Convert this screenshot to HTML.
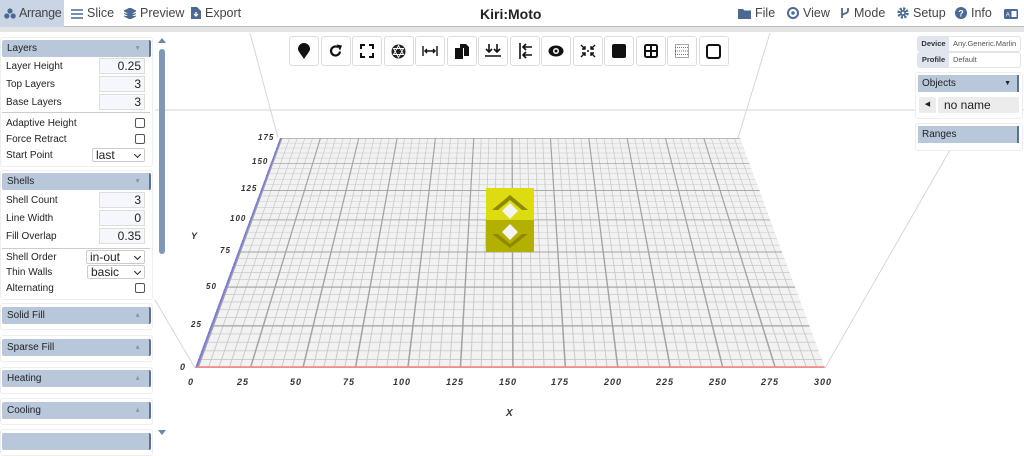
<!DOCTYPE html>
<html><head><meta charset="utf-8"><style>
*{box-sizing:border-box;margin:0;padding:0}
body{width:1024px;height:436px;overflow:hidden;background:#fff;font-family:"Liberation Sans",sans-serif;position:relative;color:#222}
.abs{position:absolute}
#top{left:0;top:0;width:1024px;height:27px;background:#fff;border-bottom:1px solid #bbb}
#band{left:0;top:27px;width:1024px;height:5px;background:#e4e4e4}
.tab{position:absolute;top:0;height:27px;line-height:27px;font-size:12.5px;color:#444;white-space:nowrap}
.tab svg{vertical-align:-2px;margin-right:4px}
#grid{left:0;top:0;width:600px;height:350px;transform-origin:0 0;
transform:matrix3d(0.76667,0,0,0,-0.39314,0.37343,0,-0.00077086,0,0,1,0,280,138,0,1);
background-color:#f2f2f2;
background-image:linear-gradient(90deg,#a2a2a2 0 1.6px,transparent 1.6px),linear-gradient(180deg,#a2a2a2 0 1.6px,transparent 1.6px),linear-gradient(90deg,#cacaca 0 1px,transparent 1px),linear-gradient(180deg,#cacaca 0 1px,transparent 1px);
background-size:50px 50px,50px 50px,10px 10px,10px 10px;background-position:0 0,0 0,0 0,0 0;
border-left:2px solid #7a7ae0;border-bottom:2px solid #f08c8c}
.lbl{position:absolute;font-size:8px;font-style:italic;font-weight:bold;color:#333;letter-spacing:1px}
.xl{top:377px;font-size:9px}
.tb{position:absolute;top:36px;width:30px;height:30px;border:1px solid #ddd;border-radius:3px;background:#fff;display:flex;align-items:center;justify-content:center}
.panel{position:absolute;left:0;width:153px;background:#fff;border:1px solid #eee;border-radius:3px}
.hdr{position:absolute;left:2px;width:149px;height:17px;background:#b9c7db;border-right:2px solid #5a7394;font-size:10px;line-height:17px;padding-left:5px;color:#222;border-radius:2px}
.hdr i{position:absolute;right:8px;top:0;font-style:normal;font-size:7px;color:#8898b0}
.row{position:absolute;left:6px;font-size:10px;color:#222}
.inp{position:absolute;left:99px;width:46px;height:16px;border:1px solid #ddd;background:#f5f7fc;font-size:12px;text-align:right;padding-right:3px;line-height:15px}
.cb{position:absolute;left:135px;width:10px;height:10px;border:1px solid #555;border-radius:2px;background:#fff}
.sel{position:absolute;left:88px;width:57px;height:14px;border:1px solid #ccc;border-radius:2px;font-size:12px;line-height:13px;padding-left:3px;background:#fff}
.sel:after{content:"";position:absolute;right:4px;top:3px;width:4px;height:4px;border-right:1.5px solid #222;border-bottom:1.5px solid #222;transform:rotate(45deg)}
.sep{position:absolute;left:2px;width:148px;height:1px;background:#ccc}
</style></head><body>

<svg class="abs" style="left:0;top:0" width="1024" height="436">
<g stroke="#d6d6d6" stroke-width="1" fill="none">
<line x1="155" y1="110" x2="1024" y2="110"/>
<line x1="250" y1="33" x2="278" y2="138"/>
<line x1="770" y1="33" x2="738" y2="138"/>
<line x1="155" y1="300" x2="195" y2="368"/>
<line x1="825" y1="368" x2="950" y2="150"/>
</g>
</svg>

<div id="grid" class="abs"></div>

<svg class="abs" style="left:486px;top:188px" width="48" height="64" viewBox="0 0 48 64">
<rect x="0" y="0" width="48" height="32" fill="#dcdc10"/>
<rect x="0" y="32" width="48" height="32" fill="#b4b000"/>
<polygon points="24,7 42,22 36,22 24,12 12,22 6,22" fill="#8e8a00"/>
<polygon points="24,15 32,23 24,31 16,23" fill="#f4f4f4"/>
<polygon points="24,36 32,44 24,52 16,44" fill="#f4f4f4"/>
<polygon points="6,46 12,46 24,56 36,46 42,46 24,60" fill="#8e8a00"/>
</svg>

<div class="lbl" style="left:258px;top:133px">175</div>
<div class="lbl" style="left:252px;top:157px">150</div>
<div class="lbl" style="left:241px;top:184px">125</div>
<div class="lbl" style="left:230px;top:214px">100</div>
<div class="lbl" style="left:220px;top:246px">75</div>
<div class="lbl" style="left:206px;top:282px">50</div>
<div class="lbl" style="left:191px;top:320px">25</div>
<div class="lbl" style="left:180px;top:362px;font-size:9px">0</div>
<div class="lbl" style="left:191px;top:231px;font-size:9px">Y</div>
<div class="lbl xl" style="left:188px">0</div>
<div class="lbl xl" style="left:237px">25</div>
<div class="lbl xl" style="left:290px">50</div>
<div class="lbl xl" style="left:343px">75</div>
<div class="lbl xl" style="left:393px">100</div>
<div class="lbl xl" style="left:446px">125</div>
<div class="lbl xl" style="left:499px">150</div>
<div class="lbl xl" style="left:551px">175</div>
<div class="lbl xl" style="left:604px">200</div>
<div class="lbl xl" style="left:656px">225</div>
<div class="lbl xl" style="left:709px">250</div>
<div class="lbl xl" style="left:761px">275</div>
<div class="lbl xl" style="left:814px">300</div>
<div class="lbl" style="left:506px;top:408px;font-size:10px">X</div>

<div id="top" class="abs"></div>
<div id="band" class="abs"></div>
<div class="tab" style="left:0;width:64px;background:#c9d5e4;padding-left:4px;overflow:hidden;letter-spacing:-0.3px"><svg width="12" height="11" viewBox="0 0 12 11" style="margin-right:3px"><circle cx="6" cy="3" r="2.6" fill="#4a6a94"/><circle cx="2.8" cy="8" r="2.6" fill="#4a6a94"/><circle cx="9.2" cy="8" r="2.6" fill="#4a6a94"/></svg>Arrange</div>
<div class="tab" style="left:71px"><svg width="12" height="10" viewBox="0 0 12 10"><path d="M0 1h12M0 5h12M0 9h12" stroke="#4a6a94" stroke-width="1.5"/></svg>Slice</div>
<div class="tab" style="left:124px"><svg width="12" height="11" viewBox="0 0 12 11"><path d="M6 0L12 3 6 6 0 3z M0 5.5L6 8.5 12 5.5 M0 8L6 11 12 8" fill="#4a6a94" stroke="#4a6a94" stroke-width="1"/></svg>Preview</div>
<div class="tab" style="left:191px"><svg width="10" height="12" viewBox="0 0 10 12"><path d="M0 0h6l4 4v8H0z" fill="#4a6a94"/><path d="M5 5v4M3 7l2 2 2-2" stroke="#fff" stroke-width="1.3" fill="none"/></svg>Export</div>
<div class="abs" style="left:480px;top:6px;font-size:14px;font-weight:bold;color:#222">Kiri:Moto</div>
<div class="tab" style="left:738px"><svg width="13" height="11" viewBox="0 0 13 11"><path d="M0 1h5l1.5 1.5H13V11H0z" fill="#4a6a94"/></svg>File</div>
<div class="tab" style="left:787px"><svg width="12" height="12" viewBox="0 0 12 12"><circle cx="6" cy="6" r="5" fill="none" stroke="#4a6a94" stroke-width="2"/><circle cx="6" cy="6" r="1.8" fill="#4a6a94"/></svg>View</div>
<div class="tab" style="left:840px"><svg width="10" height="12" viewBox="0 0 10 12"><path d="M2 1v10M8 1v3c0 3-6 2-6 5" stroke="#4a6a94" stroke-width="1.8" fill="none"/></svg>Mode</div>
<div class="tab" style="left:897px"><svg width="12" height="12" viewBox="0 0 12 12"><circle cx="6" cy="6" r="4.2" fill="none" stroke="#4a6a94" stroke-width="3" stroke-dasharray="2 1.3"/><circle cx="6" cy="6" r="3" fill="#4a6a94"/><circle cx="6" cy="6" r="1.3" fill="#fff"/></svg>Setup</div>
<div class="tab" style="left:955px"><svg width="12" height="12" viewBox="0 0 12 12"><circle cx="6" cy="6" r="6" fill="#4a6a94"/><text x="6" y="9.5" font-size="9" font-weight="bold" fill="#fff" text-anchor="middle" font-family="Liberation Sans">?</text></svg>Info</div>
<div class="tab" style="left:1004px"><svg width="14" height="10" viewBox="0 0 14 10"><rect width="14" height="10" rx="1.5" fill="#4a6a94"/><rect x="7.5" y="2" width="5" height="6" fill="#fff"/><text x="3.8" y="7.5" font-size="6" fill="#fff" text-anchor="middle" font-family="Liberation Sans">A</text></svg></div>

<div class="tb" style="left:289px"><svg width="14" height="16" viewBox="0 0 14 16"><path d="M7 16C3 10 1 8 1 6a6 6 0 0112 0c0 2-2 4-6 10z" fill="#111"/></svg></div>
<div class="tb" style="left:320.5px"><svg width="14" height="14" viewBox="0 0 14 14"><path d="M11 7.5A4.5 4.5 0 1 1 9 3.2" stroke="#111" stroke-width="2.2" fill="none"/><path d="M7.5 0.5L13 1.5 11 6.5z" fill="#111"/></svg></div>
<div class="tb" style="left:352px"><svg width="14" height="14" viewBox="0 0 14 14"><path d="M1 5V1h4M9 1h4v4M13 9v4H9M5 13H1V9" stroke="#111" stroke-width="2" fill="none"/></svg></div>
<div class="tb" style="left:383.5px"><svg width="15" height="15" viewBox="0 0 15 15"><circle cx="7.5" cy="7.5" r="7" fill="#222"/><path d="M7.5 1.5L12.5 10.5H2.5z M7.5 13.5L2.5 4.5H12.5z" fill="none" stroke="#fff" stroke-width="0.9"/></svg></div>
<div class="tb" style="left:415px"><svg width="16" height="10" viewBox="0 0 16 10"><path d="M1 0v10M15 0v10M3 5h10M5 3L3 5l2 2M11 3l2 2-2 2" stroke="#111" stroke-width="1.4" fill="none"/></svg></div>
<div class="tb" style="left:446.5px"><svg width="14" height="15" viewBox="0 0 14 15"><rect x="0" y="4" width="8" height="11" fill="#111"/><path d="M5 0h6l3 3v9H9V4H5z" fill="#111"/></svg></div>
<div class="tb" style="left:478px"><svg width="16" height="14" viewBox="0 0 16 14"><path d="M4 0v8M1 5l3 3 3-3M12 0v8M9 5l3 3 3-3M0 12h16" stroke="#111" stroke-width="1.6" fill="none"/></svg></div>
<div class="tb" style="left:509.5px"><svg width="14" height="16" viewBox="0 0 14 16"><path d="M2 0v16M14 4H5M8 1L5 4l3 3M14 12H5M8 9l-3 3 3 3" stroke="#111" stroke-width="1.6" fill="none"/></svg></div>
<div class="tb" style="left:541px"><svg width="16" height="12" viewBox="0 0 16 12"><ellipse cx="8" cy="6" rx="7.5" ry="5.5" fill="#111"/><circle cx="8" cy="6" r="3" fill="#fff"/><circle cx="8" cy="6" r="1.5" fill="#111"/></svg></div>
<div class="tb" style="left:572.5px"><svg width="16" height="14" viewBox="0 0 16 14"><path d="M1 1l4 4M5 2v3H2M15 1l-4 4M11 2v3h3M1 13l4-4M5 12V9H2M15 13l-4-4M11 12V9h3" stroke="#111" stroke-width="1.4" fill="none"/><circle cx="8" cy="7" r="1" fill="#111"/></svg></div>
<div class="tb" style="left:604px"><svg width="14" height="14"><rect width="14" height="14" rx="2" fill="#111"/></svg></div>
<div class="tb" style="left:635.5px"><svg width="14" height="14" viewBox="0 0 14 14"><rect x="1" y="1" width="12" height="12" rx="1.5" fill="none" stroke="#111" stroke-width="2"/><path d="M7 1v12M1 7h12" stroke="#111" stroke-width="2"/></svg></div>
<div class="tb" style="left:667px"><svg width="14" height="14" viewBox="0 0 14 14"><rect x="0.5" y="0.5" width="13" height="13" fill="none" stroke="#555" stroke-width="1" stroke-dasharray="1 1"/><path d="M0 3.5h14M0 7h14M0 10.5h14" stroke="#777" stroke-dasharray="1 1"/></svg></div>
<div class="tb" style="left:698.5px"><svg width="15" height="15"><rect x="1" y="1" width="13" height="13" rx="2" fill="none" stroke="#111" stroke-width="2"/></svg></div>

<div class="panel" style="top:37px;height:130px"></div>
<div class="hdr" style="top:40px">Layers<i>▼</i></div>
<div class="row" style="top:61px">Layer Height</div><div class="inp" style="top:58px">0.25</div>
<div class="row" style="top:79px">Top Layers</div><div class="inp" style="top:76px">3</div>
<div class="row" style="top:97px">Base Layers</div><div class="inp" style="top:94px">3</div>
<div class="sep" style="top:112px"></div>
<div class="row" style="top:118px">Adaptive Height</div><div class="cb" style="top:118px"></div>
<div class="row" style="top:134px">Force Retract</div><div class="cb" style="top:134px"></div>
<div class="row" style="top:150px">Start Point</div><div class="sel" style="left:92px;width:53px;top:148px">last</div>

<div class="panel" style="top:170px;height:130px"></div>
<div class="hdr" style="top:173px">Shells<i>▼</i></div>
<div class="row" style="top:195px">Shell Count</div><div class="inp" style="top:192px">3</div>
<div class="row" style="top:213px">Line Width</div><div class="inp" style="top:210px">0</div>
<div class="row" style="top:231px">Fill Overlap</div><div class="inp" style="top:228px">0.35</div>
<div class="sep" style="top:248px"></div>
<div class="row" style="top:252px">Shell Order</div><div class="sel" style="left:86px;width:59px;top:250px">in-out</div>
<div class="row" style="top:267px">Thin Walls</div><div class="sel" style="left:87px;width:58px;top:265px">basic</div>
<div class="row" style="top:283px">Alternating</div><div class="cb" style="top:283px"></div>

<div class="panel" style="top:303px;height:27px"></div>
<div class="hdr" style="top:307px">Solid Fill<i>▲</i></div>
<div class="panel" style="top:335px;height:27px"></div>
<div class="hdr" style="top:339px">Sparse Fill<i>▲</i></div>
<div class="panel" style="top:367px;height:27px"></div>
<div class="hdr" style="top:370px">Heating<i>▲</i></div>
<div class="panel" style="top:398px;height:27px"></div>
<div class="hdr" style="top:402px">Cooling<i>▲</i></div>
<div class="panel" style="top:429px;height:27px"></div>
<div class="hdr" style="top:433px"></div>

<div class="abs" style="left:158px;top:38px;width:0;height:0;border-left:4px solid transparent;border-right:4px solid transparent;border-bottom:5px solid #6e88a8"></div>
<div class="abs" style="left:159px;top:49px;width:6px;height:205px;background:#8098b8;border-radius:3px"></div>
<div class="abs" style="left:158px;top:430px;width:0;height:0;border-left:4px solid transparent;border-right:4px solid transparent;border-top:5px solid #6e88a8"></div>

<div class="abs" style="left:917px;top:36px;width:104px;height:16px;border:1px solid #e4e4e4;border-radius:3px;background:#fff"></div>
<div class="abs" style="left:918px;top:37px;width:31px;height:14px;background:#e0e6ef;font-size:7.5px;font-weight:bold;line-height:14px;text-align:center;color:#333">Device</div>
<div class="abs" style="left:953px;top:37px;font-size:7.5px;line-height:14px;color:#555">Any.Generic.Marlin</div>
<div class="abs" style="left:917px;top:52px;width:104px;height:16px;border:1px solid #e4e4e4;border-radius:3px;background:#fff"></div>
<div class="abs" style="left:918px;top:53px;width:31px;height:14px;background:#e0e6ef;font-size:7.5px;font-weight:bold;line-height:14px;text-align:center;color:#333">Profile</div>
<div class="abs" style="left:953px;top:53px;font-size:7.5px;line-height:14px;color:#555">Default</div>

<div class="abs" style="left:915px;top:72px;width:108px;height:47px;border:1px solid #eee;border-radius:3px;background:#fff"></div>
<div class="abs" style="left:918px;top:75px;width:101px;height:17px;background:#b9c7db;border-right:2px solid #5a7394;font-size:10px;line-height:17px;padding-left:4px">Objects<span style="position:absolute;right:6px;font-size:7px">▼</span></div>
<div class="abs" style="left:919px;top:97px;width:17px;height:16px;background:#ececec;border-radius:2px;font-size:7px;line-height:16px;text-align:center">◀</div>
<div class="abs" style="left:938px;top:97px;width:81px;height:16px;background:#ececec;border-radius:2px;font-size:12px;line-height:16px;padding-left:6px">no name</div>

<div class="abs" style="left:915px;top:123px;width:108px;height:28px;border:1px solid #eee;border-radius:3px;background:#fff"></div>
<div class="abs" style="left:918px;top:126px;width:101px;height:17px;background:#b9c7db;border-right:2px solid #5a7394;font-size:10px;line-height:17px;padding-left:4px">Ranges</div>
</body></html>
